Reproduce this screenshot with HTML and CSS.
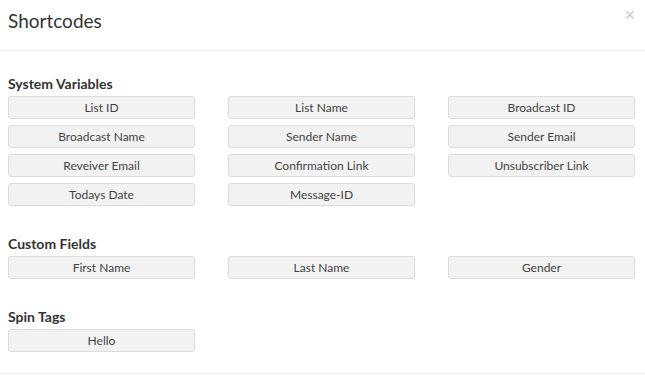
FILE: index.html
```html
<!DOCTYPE html>
<html lang="en">
<head>
    <meta charset="UTF-8">
    <meta name="viewport" content="width=device-width, initial-scale=1.0">
    <title>Shortcodes</title>
    <link rel="stylesheet" href="styles.css">
</head>
<body>
    <div class="modal">
        <div class="modal-header">
            <h4 class="modal-title">Shortcodes</h4>
            <button type="button" class="close">&times;</button>
        </div>
        <div class="modal-body">
            <h5 class="group-title">System Variables</h5>
            <div class="code-grid">
                <button class="code-btn">List ID</button>
                <button class="code-btn">List Name</button>
                <button class="code-btn">Broadcast ID</button>
                <button class="code-btn">Broadcast Name</button>
                <button class="code-btn">Sender Name</button>
                <button class="code-btn">Sender Email</button>
                <button class="code-btn">Reveiver Email</button>
                <button class="code-btn">Confirmation Link</button>
                <button class="code-btn">Unsubscriber Link</button>
                <button class="code-btn">Todays Date</button>
                <button class="code-btn">Message-ID</button>
            </div>

            <h5 class="group-title">Custom Fields</h5>
            <div class="code-grid">
                <button class="code-btn">First Name</button>
                <button class="code-btn">Last Name</button>
                <button class="code-btn">Gender</button>
            </div>

            <h5 class="group-title">Spin Tags</h5>
            <div class="code-grid">
                <button class="code-btn">Hello</button>
            </div>
        </div>
    </div>
</body>
</html>
```

FILE: styles.css
```css
body {
    margin: 0;
    background-color: #fff;
    font-family: Lato, "Open Sans", sans-serif;
    color: #333;
}
.modal {
    width: 645px;
    height: 375px;
    overflow: hidden;
}
.modal-header {
    height: 51px;
    border-bottom: 1px solid #eee;
    display: flex;
    justify-content: space-between;
    align-items: flex-start;
    padding: 0 10px 0 8px;
    box-sizing: border-box;
}
.modal-title {
    margin: 8px 0 0;
    font-size: 19px;
    font-weight: normal;
    line-height: 26px;
}
.close {
    border: 0;
    background: none;
    padding: 0;
    margin-top: 6px;
    font-family: Arial, sans-serif;
    font-size: 18px;
    line-height: 18px;
    color: #c8c8c8;
    cursor: pointer;
}
.modal-body {
    padding: 24px 8px 0;
    border-bottom: 1px solid #eee;
    height: 323px;
    box-sizing: border-box;
}
.group-title {
    margin: 0 0 3px;
    font-size: 14px;
    font-weight: bold;
    line-height: 18px;
}
.code-grid {
    display: grid;
    grid-template-columns: repeat(3, 187px);
    column-gap: 33px;
    row-gap: 6px;
    margin-bottom: 29px;
}
.code-grid:last-child {
    margin-bottom: 0;
}
.code-btn {
    height: 23px;
    padding: 0;
    background-color: #f2f2f2;
    border: 1px solid #dcdcdc;
    border-radius: 3px;
    font-family: Lato, "Open Sans", sans-serif;
    font-size: 12px;
    color: #444;
    cursor: pointer;
}
```
